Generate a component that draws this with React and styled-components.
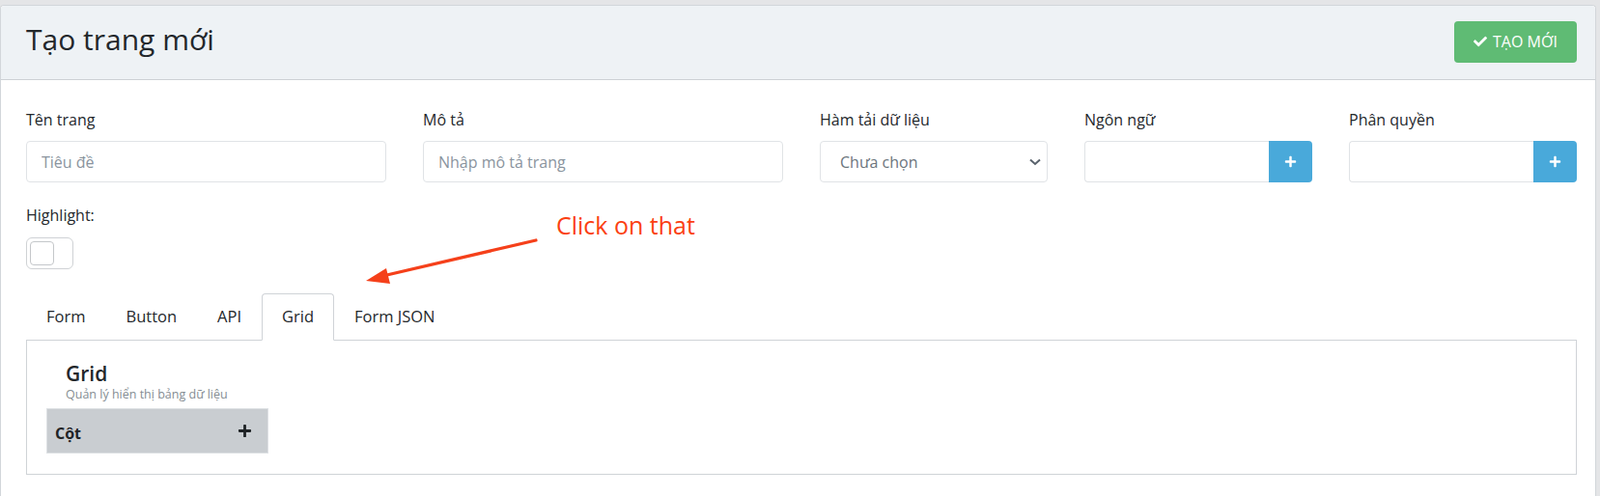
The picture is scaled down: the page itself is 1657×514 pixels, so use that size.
import React from 'react'
import styled, { createGlobalStyle } from 'styled-components'
import { FaCheck, FaPlus } from 'react-icons/fa'

const GlobalStyle = createGlobalStyle`
  html, body {
    margin: 0;
    padding: 0;
    background-color: #e4e5e7;
    font-family: 'Open Sans', 'Noto Sans', sans-serif;
    color: #212529;
  }
  * {
    box-sizing: border-box;
  }
`

const Page = styled.div`
  position: relative;
  padding: 5px 4px 0 0;
  min-height: 514px;
`

const Card = styled.div`
  background-color: #fff;
  border: 1px solid #d2d6da;
  border-bottom: none;
  border-radius: 4px 4px 0 0;
  min-height: 509px;
`

const CardHeader = styled.div`
  background-color: #eef2f5;
  border-bottom: 1px solid #cdd1d5;
  border-radius: 4px 4px 0 0;
  height: 77px;
  padding: 0 19px 2px 26px;
  display: flex;
  align-items: center;
  justify-content: space-between;
`

const Title = styled.h1`
  margin: 0 0 4px;
  font-size: 30px;
  font-weight: 500;
  line-height: 1.2;
  color: #23272b;
`

const CreateButton = styled.button`
  display: flex;
  align-items: center;
  gap: 6px;
  height: 43px;
  width: 127px;
  justify-content: center;
  border: none;
  border-radius: 4px;
  background-color: #5fbb74;
  color: #fff;
  font-family: inherit;
  font-size: 16px;
  svg {
    font-size: 14px;
  }
`

const CardBody = styled.div`
  padding: 29px 19px 0 26px;
`

const FieldRow = styled.div`
  display: grid;
  grid-template-columns: repeat(12, 1fr);
  column-gap: 38px;
`

const Field = styled.div`
  grid-column: span ${(p) => p.span};
`

const Label = styled.label`
  display: block;
  font-size: 16px;
  line-height: 24px;
  margin-bottom: 10px;
  color: #24282c;
`

const TextInput = styled.input`
  display: block;
  width: 100%;
  height: 43px;
  border: 1px solid #e0e3e6;
  border-radius: 4px;
  padding: 0 15px;
  font-family: inherit;
  font-size: 16px;
  color: #495057;
  background: #fff;
  &::placeholder {
    color: #8a949e;
  }
`

const SelectBox = styled.div`
  height: 43px;
  border: 1px solid #e0e3e6;
  border-radius: 4px;
  padding: 0 6px 0 20px;
  display: flex;
  align-items: center;
  justify-content: space-between;
  font-size: 16px;
  color: #6c757d;
`

const InputGroup = styled.div`
  display: flex;
  height: 43px;
  ${TextInput} {
    border-right: none;
    border-radius: 4px 0 0 4px;
  }
`

const AddButton = styled.button`
  flex: 0 0 45px;
  border: none;
  border-radius: 0 4px 4px 0;
  background-color: #49a9da;
  color: #fff;
  display: flex;
  align-items: center;
  justify-content: center;
  svg {
    font-size: 13px;
  }
`

const HighlightBlock = styled.div`
  margin-top: 22px;
  ${Label} {
    margin-bottom: 11px;
  }
`

const Toggle = styled.div`
  width: 49px;
  height: 33px;
  border: 1px solid #cfd2d5;
  border-radius: 6px;
  padding: 3px;
`

const Knob = styled.div`
  width: 25px;
  height: 25px;
  border: 1px solid #c4c7ca;
  border-radius: 4px;
`

const Tabs = styled.div`
  margin-top: 25px;
  display: flex;
  border-bottom: 1px solid #cfd3d7;
`

const Tab = styled.div`
  padding: 11px 20px 12px;
  font-size: 16.5px;
  line-height: 24px;
  color: #24282c;
  margin-bottom: -1px;
  border: 1px solid ${(p) => (p.active ? '#cfd3d7' : 'transparent')};
  border-bottom-color: ${(p) => (p.active ? '#fff' : 'transparent')};
  border-radius: 4px 4px 0 0;
  background: ${(p) => (p.active ? '#fff' : 'transparent')};
`

const TabPanel = styled.div`
  border: 1px solid #cfd3d7;
  border-top: none;
  height: 139px;
  padding: 22px 20px 20px;
`

const SectionHead = styled.div`
  padding-left: 20px;
`

const SectionTitle = styled.div`
  font-size: 21px;
  font-weight: 600;
  line-height: 25px;
  color: #23272b;
`

const SectionDesc = styled.div`
  font-size: 12.5px;
  line-height: 17px;
  color: #858d93;
`

const ColumnHeader = styled.div`
  margin-top: 6px;
  width: 230px;
  height: 47px;
  background-color: #c9cdd1;
  border: 1px solid #dee1e4;
  display: flex;
  align-items: center;
  justify-content: space-between;
  padding: 4px 16px 0 8px;
  font-size: 16px;
  font-weight: 700;
  color: #1f2326;
  svg {
    font-size: 15px;
    margin-top: -4px;
  }
`

const Note = styled.div`
  position: absolute;
  left: 576px;
  top: 216px;
  font-size: 25px;
  line-height: 34px;
  color: #fb3f12;
`

const ArrowLayer = styled.svg`
  position: absolute;
  left: 0;
  top: 0;
  pointer-events: none;
`

function Chevron() {
  return (
    <svg width="12" height="8" viewBox="0 0 12 8">
      <path d="M1 1.5 L6 6 L11 1.5" fill="none" stroke="#59626c" strokeWidth="2" />
    </svg>
  )
}

function App() {
  return (
    <Page>
      <GlobalStyle />
      <Card>
        <CardHeader>
          <Title>Tạo trang mới</Title>
          <CreateButton>
            <FaCheck />
            TẠO MỚI
          </CreateButton>
        </CardHeader>
        <CardBody>
          <FieldRow>
            <Field span={3}>
              <Label>Tên trang</Label>
              <TextInput placeholder="Tiêu đề" />
            </Field>
            <Field span={3}>
              <Label>Mô tả</Label>
              <TextInput placeholder="Nhập mô tả trang" />
            </Field>
            <Field span={2}>
              <Label>Hàm tải dữ liệu</Label>
              <SelectBox>
                Chưa chọn
                <Chevron />
              </SelectBox>
            </Field>
            <Field span={2}>
              <Label>Ngôn ngữ</Label>
              <InputGroup>
                <TextInput />
                <AddButton>
                  <FaPlus />
                </AddButton>
              </InputGroup>
            </Field>
            <Field span={2}>
              <Label>Phân quyền</Label>
              <InputGroup>
                <TextInput />
                <AddButton>
                  <FaPlus />
                </AddButton>
              </InputGroup>
            </Field>
          </FieldRow>

          <HighlightBlock>
            <Label>Highlight:</Label>
            <Toggle>
              <Knob />
            </Toggle>
          </HighlightBlock>

          <Tabs>
            <Tab>Form</Tab>
            <Tab>Button</Tab>
            <Tab>API</Tab>
            <Tab active>Grid</Tab>
            <Tab>Form JSON</Tab>
          </Tabs>
          <TabPanel>
            <SectionHead>
              <SectionTitle>Grid</SectionTitle>
              <SectionDesc>Quản lý hiển thị bảng dữ liệu</SectionDesc>
            </SectionHead>
            <ColumnHeader>
              Cột
              <FaPlus />
            </ColumnHeader>
          </TabPanel>
        </CardBody>
      </Card>

      {/* annotation drawn over the screenshot */}
      <Note>Click on that</Note>
      <ArrowLayer width="600" height="320">
        <line x1="555" y1="249" x2="392" y2="287" stroke="#f5401a" strokeWidth="3.2" strokeLinecap="round" />
        <polygon points="379,291 400,278 404,294" fill="#f5401a" />
      </ArrowLayer>
    </Page>
  )
}

export default App
